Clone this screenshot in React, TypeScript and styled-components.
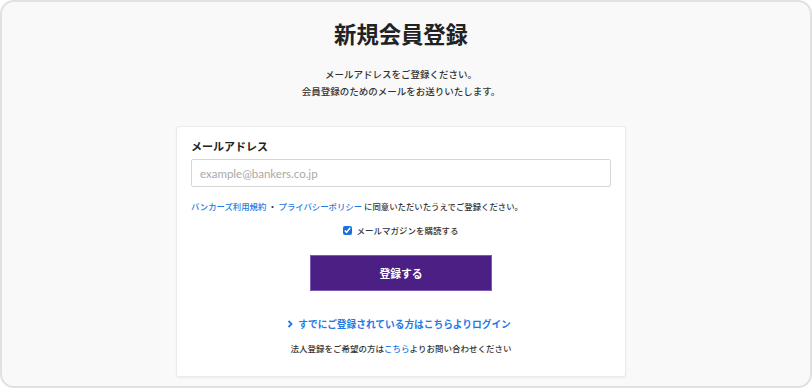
import React, { useState } from 'react';
import styled, { createGlobalStyle } from 'styled-components';

const GlobalStyle = createGlobalStyle`
    html, body {
        margin: 0;
        padding: 0;
        background: #ffffff;
    }
    body {
        font-family: "Noto Sans CJK JP", "Noto Sans", sans-serif;
        color: #333333;
    }
`;

const Frame = styled.div`
    box-sizing: border-box;
    width: 812px;
    height: 388px;
    border: 2px solid #e1e1e1;
    border-radius: 14px;
    background: #f9f9f9;
    display: flex;
    flex-direction: column;
    align-items: center;
    padding: 16px 10px 0 0;
    overflow: hidden;
`;

const Title = styled.h1`
    margin: 0;
    font-size: 22.3px;
    line-height: 30px;
    font-weight: 700;
    color: #222222;
`;

const Lead = styled.p`
    margin: 18px 0 0;
    font-size: 9.5px;
    line-height: 17px;
    font-weight: 500;
    text-align: center;
    color: #333333;
`;

const Card = styled.div`
    box-sizing: border-box;
    width: 450px;
    margin-top: 26px;
    padding: 11px 14px 21px;
    background: #ffffff;
    border: 1px solid #ebebeb;
    border-radius: 3px;
    box-shadow: 0 1px 2px rgba(0, 0, 0, 0.06);
    display: flex;
    flex-direction: column;
`;

const Label = styled.label`
    font-size: 11px;
    line-height: 16px;
    font-weight: 700;
    color: #222222;
`;

const EmailInput = styled.input`
    box-sizing: border-box;
    width: 420px;
    height: 28px;
    margin-top: 5px;
    padding: 0 8px;
    border: 1px solid #d6d6d6;
    border-radius: 2px;
    font-family: Lato, "Noto Sans", sans-serif;
    font-size: 11.5px;
    color: #333333;
    outline: none;
    &::placeholder {
        color: #a9a9a9;
    }
`;

const Terms = styled.p`
    margin: 12px 0 0;
    font-size: 8.4px;
    line-height: 14px;
    font-weight: 500;
    color: #333333;
    white-space: nowrap;
`;

const Link = styled.a<{ $bold?: boolean }>`
    color: #1f7ae6;
    text-decoration: none;
    font-weight: ${(p) => (p.$bold ? 700 : 500)};
`;

const CheckRow = styled.label`
    margin-top: 10px;
    display: flex;
    align-items: center;
    justify-content: center;
    gap: 4px;
    font-size: 8.5px;
    line-height: 14px;
    font-weight: 500;
    color: #333333;
`;

const Check = styled.input`
    width: 9px;
    height: 9px;
    margin: 0;
    accent-color: #1a6fdc;
`;

const SubmitButton = styled.button`
    align-self: center;
    box-sizing: border-box;
    width: 182px;
    height: 36px;
    margin-top: 18px;
    border: 1px solid #7b5bb5;
    border-radius: 0;
    background: #4b1f83;
    color: #ffffff;
    font-family: "Noto Sans CJK JP", sans-serif;
    font-size: 10.8px;
    font-weight: 700;
    cursor: pointer;
`;

const LoginLine = styled.div`
    margin-top: 25px;
    margin-right: 4px;
    display: flex;
    align-items: center;
    justify-content: center;
    gap: 4px;
    font-size: 9.7px;
    line-height: 16px;
`;

const Note = styled.p`
    margin: 9px 0 0;
    font-size: 8.5px;
    line-height: 14px;
    font-weight: 500;
    text-align: center;
    color: #333333;
`;

const Chevron: React.FC = () => (
    <svg width="7" height="8" viewBox="0 0 7 8">
        <path d="M1.5 1 L4.5 4 L1.5 7" fill="none" stroke="#1f7ae6" strokeWidth="1.8" />
    </svg>
);

const App: React.FC = () => {
    const [email, setEmail] = useState('');
    const [magazine, setMagazine] = useState(true);

    return (
        <>
            <GlobalStyle />
            <Frame>
                <Title>新規会員登録</Title>
                <Lead>
                    メールアドレスをご登録ください。
                    <br />
                    会員登録のためのメールをお送りいたします。
                </Lead>
                <Card>
                    <Label htmlFor="email">メールアドレス</Label>
                    <EmailInput
                        id="email"
                        type="email"
                        placeholder="example@bankers.co.jp"
                        value={email}
                        onChange={(e) => setEmail(e.target.value)}
                    />
                    <Terms>
                        <Link href="#">バンカーズ利用規約</Link> ・ <Link href="#">プライバシーポリシー</Link> に同意いただいたうえでご登録ください。
                    </Terms>
                    <CheckRow>
                        <Check type="checkbox" checked={magazine} onChange={(e) => setMagazine(e.target.checked)} />
                        メールマガジンを購読する
                    </CheckRow>
                    <SubmitButton type="button">登録する</SubmitButton>
                    <LoginLine>
                        <Chevron />
                        <Link href="#" $bold>すでにご登録されている方はこちらよりログイン</Link>
                    </LoginLine>
                    <Note>
                        法人登録をご希望の方は<Link href="#">こちら</Link>よりお問い合わせください
                    </Note>
                </Card>
            </Frame>
        </>
    );
};

export default App;
